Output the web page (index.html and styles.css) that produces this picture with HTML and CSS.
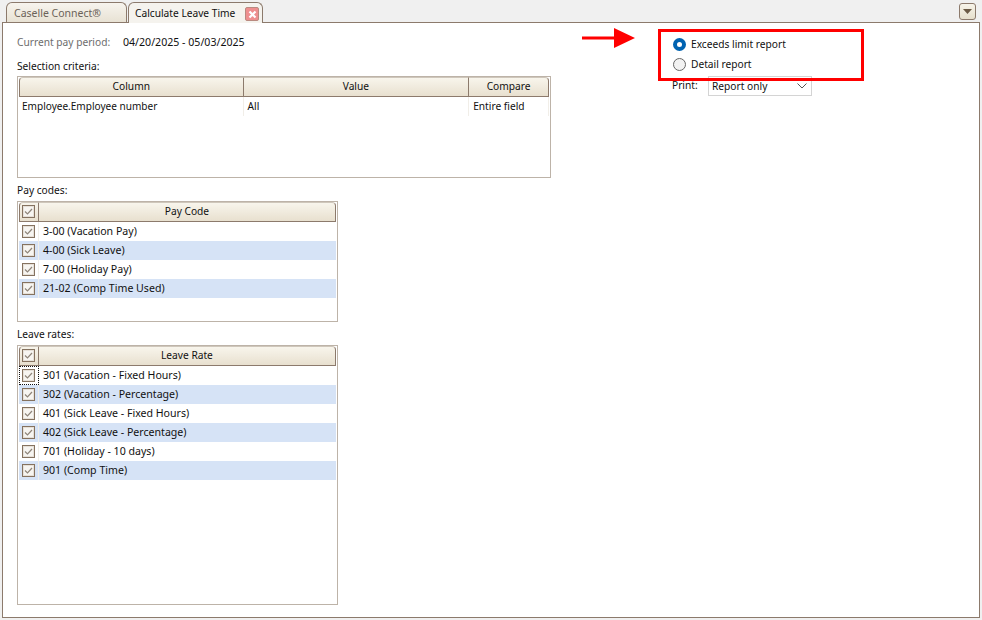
FILE: index.html
```html
<!DOCTYPE html>
<html lang="en">
<head>
<meta charset="utf-8">
<title>Calculate Leave Time</title>
<link rel="stylesheet" href="styles.css">
</head>
<body>
<div class="tabstrip">
  <div class="tab tab-inactive">Caselle Connect®</div>
  <div class="tab tab-active">Calculate Leave Time
    <span class="tab-close"><svg width="11" height="11" viewBox="0 0 11 11"><path d="M2.500 2.500l6 6M8.500 2.500l-6 6" stroke="#fff" stroke-width="2.200" fill="none"/></svg></span>
  </div>
  <div class="tab-menu"><svg width="9" height="5" viewBox="0 0 9 5"><path d="M0 0h9L4.500 5z" fill="#6b5a45"/></svg></div>
</div>
<main class="panel">
  <section class="left">
    <div class="period"><span class="muted">Current pay period:</span><span class="digits">04/20/2025 - 05/03/2025</span></div>
    <div class="label label-first">Selection criteria:</div>
    <div class="grid grid-sel">
      <div class="header">
        <div class="hcell w-col">Column</div>
        <div class="hcell w-val">Value</div>
        <div class="hcell w-cmp">Compare</div>
      </div>
      <div class="row-sel">
        <div class="cell w-col first">Employee.Employee number</div>
        <div class="cell w-val">All</div>
        <div class="cell w-cmp">Entire field</div>
      </div>
    </div>
    <div class="label">Pay codes:</div>
    <div class="grid grid-pay">
      <div class="header">
        <div class="hcell hcheck"><span class="check"><svg width="11" height="11" viewBox="0 0 11 11"><path d="M2 5.500l2.500 2.500L9 3" stroke="#8f857a" stroke-width="1.200" fill="none"/></svg></span></div>
        <div class="hcell w-fill">Pay Code</div>
      </div>
      <div class="row"><span class="cb"><span class="check"><svg width="11" height="11" viewBox="0 0 11 11"><path d="M2 5.500l2.500 2.500L9 3" stroke="#8f857a" stroke-width="1.200" fill="none"/></svg></span></span><span class="txt">3-00 (Vacation Pay)</span></div>
      <div class="row alt"><span class="cb"><span class="check"><svg width="11" height="11" viewBox="0 0 11 11"><path d="M2 5.500l2.500 2.500L9 3" stroke="#8f857a" stroke-width="1.200" fill="none"/></svg></span></span><span class="txt">4-00 (Sick Leave)</span></div>
      <div class="row"><span class="cb"><span class="check"><svg width="11" height="11" viewBox="0 0 11 11"><path d="M2 5.500l2.500 2.500L9 3" stroke="#8f857a" stroke-width="1.200" fill="none"/></svg></span></span><span class="txt">7-00 (Holiday Pay)</span></div>
      <div class="row alt"><span class="cb"><span class="check"><svg width="11" height="11" viewBox="0 0 11 11"><path d="M2 5.500l2.500 2.500L9 3" stroke="#8f857a" stroke-width="1.200" fill="none"/></svg></span></span><span class="txt">21-02 (Comp Time Used)</span></div>
    </div>
    <div class="label">Leave rates:</div>
    <div class="grid grid-rate">
      <div class="header">
        <div class="hcell hcheck"><span class="check"><svg width="11" height="11" viewBox="0 0 11 11"><path d="M2 5.500l2.500 2.500L9 3" stroke="#8f857a" stroke-width="1.200" fill="none"/></svg></span></div>
        <div class="hcell w-fill">Leave Rate</div>
      </div>
      <div class="row"><span class="cb focus"><span class="check"><svg width="11" height="11" viewBox="0 0 11 11"><path d="M2 5.500l2.500 2.500L9 3" stroke="#8f857a" stroke-width="1.200" fill="none"/></svg></span></span><span class="txt">301 (Vacation - Fixed Hours)</span></div>
      <div class="row alt"><span class="cb"><span class="check"><svg width="11" height="11" viewBox="0 0 11 11"><path d="M2 5.500l2.500 2.500L9 3" stroke="#8f857a" stroke-width="1.200" fill="none"/></svg></span></span><span class="txt">302 (Vacation - Percentage)</span></div>
      <div class="row"><span class="cb"><span class="check"><svg width="11" height="11" viewBox="0 0 11 11"><path d="M2 5.500l2.500 2.500L9 3" stroke="#8f857a" stroke-width="1.200" fill="none"/></svg></span></span><span class="txt">401 (Sick Leave - Fixed Hours)</span></div>
      <div class="row alt"><span class="cb"><span class="check"><svg width="11" height="11" viewBox="0 0 11 11"><path d="M2 5.500l2.500 2.500L9 3" stroke="#8f857a" stroke-width="1.200" fill="none"/></svg></span></span><span class="txt">402 (Sick Leave - Percentage)</span></div>
      <div class="row"><span class="cb"><span class="check"><svg width="11" height="11" viewBox="0 0 11 11"><path d="M2 5.500l2.500 2.500L9 3" stroke="#8f857a" stroke-width="1.200" fill="none"/></svg></span></span><span class="txt">701 (Holiday - 10 days)</span></div>
      <div class="row alt"><span class="cb"><span class="check"><svg width="11" height="11" viewBox="0 0 11 11"><path d="M2 5.500l2.500 2.500L9 3" stroke="#8f857a" stroke-width="1.200" fill="none"/></svg></span></span><span class="txt">901 (Comp Time)</span></div>
    </div>
  </section>
  <section class="right">
    <div class="radio-row"><span class="radio radio-on"></span>Exceeds limit report</div>
    <div class="radio-row"><span class="radio"></span>Detail report</div>
    <div class="print-row">
      <span class="print-label">Print:</span>
      <div class="select">Report only<svg width="10" height="6" viewBox="0 0 10 6"><path d="M.5.500L5 5 9.500.500" stroke="#555" fill="none"/></svg></div>
    </div>
  </section>
  <div class="redbox"></div>
  <svg class="arrow" width="53" height="20" viewBox="0 0 53 20"><path d="M0 8.500h32V0l21 10-21 10v-8.500H0z" fill="#f00"/></svg>
</main>
</body>
</html>
```

FILE: styles.css
```css
* { box-sizing: border-box; }
html, body { margin: 0; height: 100%; }
body {
  width: 982px;
  height: 620px;
  overflow: hidden;
  background: #f0f0f0;
  color: #111;
  font: 10.2px/14px "Noto Sans", Tahoma, sans-serif;
}
.tabstrip {
  display: flex;
  align-items: flex-end;
  height: 23px;
  padding-left: 6px;
  gap: 1px;
  margin-bottom: -1px;
  position: relative;
  z-index: 1;
}
.tab {
  height: 20px;
  border: 1px solid #8c7a6c;
  border-bottom: 0;
  border-radius: 6px 6px 0 0;
  display: flex;
  align-items: center;
}
.tab-inactive {
  width: 121px;
  height: 20px;
  margin-bottom: 1px;
  padding-left: 7px;
  color: #6b6258;
  background: linear-gradient(#f7f4ee, #e8e2d4);
  font-size: 10.500px;
}
.tab-active {
  width: 135px;
  height: 21px;
  padding-left: 6px;
  background: #f5f3ee;
  position: relative;
}
.tab-close {
  position: absolute;
  right: 3px;
  top: 4px;
  width: 14px;
  height: 14px;
  background: #ee8f8f;
  border: 1px solid #b98a80;
  border-radius: 2px;
  display: flex;
  align-items: center;
  justify-content: center;
}
.tab-menu {
  position: absolute;
  left: 959px;
  top: 3px;
  width: 17px;
  height: 17px;
  background: linear-gradient(#f7f4ea, #e6dfcc);
  border: 1px solid #8c7a6c;
  border-radius: 3px;
  display: flex;
  align-items: center;
  justify-content: center;
}
.panel {
  position: relative;
  display: flex;
  width: 978px;
  height: 596px;
  margin-left: 2px;
  background: #fff;
  border: 1px solid #8c7a6c;
}
.left {
  width: 534px;
  margin-left: 14px;
  flex: none;
}
.period {
  display: flex;
  margin-top: 12px;
  height: 14px;
}
.muted { color: #6d6d6d; flex: 0 0 106px; }
.digits { font-size: 10.600px; }
.label { height: 14px; margin-top: 5px; margin-bottom: 4px; }
.label-first { margin-top: 10px; margin-bottom: 3px; }
.grid {
  border: 1px solid #bdb3a8;
  background: #fff;
  padding: 0 1px;
}
.grid-sel { width: 534px; height: 102px; }
.grid-pay { width: 321px; height: 121px; }
.grid-rate { width: 321px; height: 260px; }
.header {
  display: flex;
  height: 20px;
}
.hcell {
  border: 1px solid #8c7a6c;
  border-left-width: 0;
  border-top-color: #cfc7bb;
  background: linear-gradient(#f8f5ec, #e8e0cf);
  display: flex;
  align-items: center;
  justify-content: center;
  padding-bottom: 2px;
}
.hcell:first-child { border-left-width: 1px; border-top-left-radius: 4px; }
.hcell:last-child { border-top-right-radius: 4px; }
.w-col { width: 225px; }
.w-val { width: 226px; }
.w-cmp { width: 80px; }
.w-fill { width: 299px; }
.hcheck { width: 20px; }
.row-sel { display: flex; height: 19px; }
.cell {
  height: 19px;
  padding-left: 4px;
  line-height: 18px;
  border-right: 1px solid #f1eee8;
}
.cell.first { padding-left: 3px; font-size: 10.050px; }
.row {
  display: flex;
  align-items: center;
  height: 19px;
}
.row.alt { background: #d6e3f6; }
.cb {
  width: 20px;
  height: 19px;
  flex: none;
  display: flex;
  align-items: center;
  justify-content: center;
  border-right: 1px solid #f1eee8;
}
.cb.focus { outline: 1px dotted #111; outline-offset: -1px; }
.check {
  width: 13px;
  height: 13px;
  display: flex;
  align-items: center;
  justify-content: center;
  border: 1px solid #85725f;
  background: #f7f5f1;
  box-shadow: inset 0 0 0 1px #e6e0d8;
}
.txt { padding: 0 0 2px 4px; font-size: 10.600px; }
.right {
  margin-left: 107px;
  padding-top: 11px;
  flex: none;
}
.radio-row {
  display: flex;
  align-items: center;
  height: 20px;
  margin-left: 15px;
  gap: 5px;
}
.radio {
  width: 13px;
  height: 13px;
  border-radius: 50%;
  border: 1px solid #666;
  background: #f2f2f2;
}
.radio-on {
  border: 4px solid #0063b1;
  background: #fff;
}
.print-row {
  display: flex;
  align-items: center;
  margin-top: 2px;
  margin-left: 14px;
}
.print-label { width: 36px; margin-top: -3px; }
.select {
  width: 104px;
  height: 20px;
  border: 1px solid #d4d4d4;
  display: flex;
  align-items: center;
  justify-content: space-between;
  padding: 0 4px 0 3px;
}
.redbox {
  position: absolute;
  left: 655px;
  top: 6px;
  width: 206px;
  height: 52px;
  border: 3px solid #f00;
}
.arrow {
  position: absolute;
  left: 579px;
  top: 5px;
}
```
